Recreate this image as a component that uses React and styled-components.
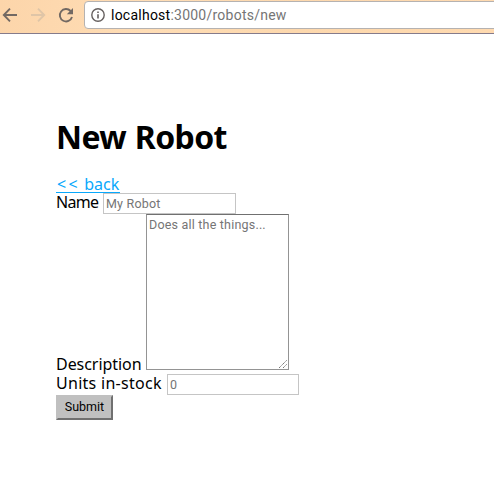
import React from "react";
import styled, { createGlobalStyle } from "styled-components";

const GlobalStyle = createGlobalStyle`
  * { box-sizing: border-box; }
  body { margin: 0; background: #fff; overflow: hidden; color: #000; font-family: "Noto Sans", sans-serif; font-size: 16px; }
`;

const Toolbar = styled.header`
  display: flex;
  height: 34px;
  background: #fed9ae;
  background-image: linear-gradient(100deg, #fcd5aa, #ffddb5 30%, #fdd8ad 60%, #ffdab0);
  border-bottom: 1px solid #857b8b;
`;

const NavIcons = styled.div`
  flex: none;
  width: 84px;
  height: 30px;
`;

const AddressBar = styled.div`
  flex: 1;
  display: flex;
  align-items: center;
  height: 28px;
  margin: 1px -6px 0 0;
  padding-left: 6px;
  background: #fff;
  border: 1px solid #b5b2b1;
  border-radius: 4px;
`;

const Address = styled.span`
  margin-left: 6px;
  color: #757575;
  font: 14px/20px Roboto, sans-serif;
  letter-spacing: 0.24px;
  white-space: nowrap;
`;

const Host = styled.span`
  color: #000;
`;

const Page = styled.main`
  padding: 81px 0 0 56px;
`;

const Title = styled.h1`
  margin: 0;
  font-size: 32px;
  line-height: 43px;
  height: 44px;
  font-weight: 700;
  letter-spacing: -0.6px;
  word-spacing: 1px;
  white-space: nowrap;
`;

const BackLink = styled.a`
  display: block;
  width: 64px;
  height: 18px;
  margin-top: 16px;
  border-bottom: 1px solid #08a8fc;
  color: #08a8fc;
  line-height: 18px;
  white-space: nowrap;
  text-decoration: none;
`;

const Arrows = styled.span`
  padding-left: 1px;
  letter-spacing: 2.4px;
`;

const Form = styled.form`
  display: flex;
  flex-direction: column;
  align-items: flex-start;
`;

const Row = styled.div`
  display: flex;
  height: ${(p) => p.$height}px;
  align-items: ${(p) => p.$align || "flex-start"};
`;

const Label = styled.label`
  width: ${(p) => p.$width}px;
  height: 18px;
  line-height: 18px;
  letter-spacing: ${(p) => p.$spacing || 0}px;
  white-space: nowrap;
`;

const Input = styled.input`
  width: ${(p) => p.$width || 133}px;
  height: 21px;
  margin: 0;
  padding: 1px 2px;
  border: 1px solid #c5c5c5;
  border-radius: 0;
  outline: none;
  font: 12.5px Roboto, sans-serif;
  letter-spacing: 0.2px;
  &::placeholder { color: #757575; opacity: 1; }
`;

const AreaFrame = styled.div`
  position: relative;
  width: 143px;
  height: 156px;
`;

const TextArea = styled.textarea`
  display: block;
  width: 100%;
  height: 100%;
  margin: 0;
  padding: 2px;
  border: 1px solid #949494;
  border-top-color: #707070;
  border-radius: 0;
  outline: none;
  resize: none;
  font: 12.5px/15px Roboto, sans-serif;
  letter-spacing: 0.2px;
  &::placeholder { color: #757575; opacity: 1; }
`;

const Grip = styled.svg`
  position: absolute;
  right: 2px;
  bottom: 2px;
`;

const Submit = styled.button`
  width: 57px;
  height: 25px;
  padding: 0 0 2px;
  border: 2px solid;
  border-color: #c0c0c0 #707070 #707070 #c0c0c0;
  border-radius: 0;
  background: #c0c0c0;
  color: #000;
  font: 12.5px Roboto, sans-serif;
`;

export default function App() {
  return (
    <>
      <GlobalStyle />
      <Toolbar>
        <NavIcons>
          <svg width="84" height="30" fill="none" strokeWidth="1.9">
            <path d="M17 15H4M10 8.7L3.8 15l6.2 6.3" stroke="#726963" />
            <path d="M31 15h13M38 8.7l6.2 6.3-6.2 6.3" stroke="#dfc5a7" />
            <path d="M70.6 11A6.2 6.2 0 1 0 72 17" stroke="#726963" />
            <path d="M73 8v6.2h-6.2z" fill="#726963" />
          </svg>
        </NavIcons>
        <AddressBar>
          <svg width="14" height="14" fill="none" stroke="#66605f">
            <circle cx="7" cy="7" r="6.2" strokeWidth="1.4" />
            <path d="M7 6.2v4.3M7 3.5v1.4" strokeWidth="1.6" />
          </svg>
          <Address><Host>localhost</Host>:3000/robots/new</Address>
        </AddressBar>
      </Toolbar>
      <Page>
        <Title>New Robot</Title>
        <BackLink href="#"><Arrows>&lt;&lt;</Arrows> back</BackLink>
        <Form>
          <Row $height={21}>
            <Label $width={47} $spacing={-0.7}>Name</Label>
            <Input placeholder="My Robot" />
          </Row>
          <Row $height={160}>
            <Row $height={159} $align="flex-end">
              <Label $width={90} $spacing={-0.05}>Description</Label>
            </Row>
            <AreaFrame>
              <TextArea placeholder="Does all the things..." />
              <Grip width="8" height="8" stroke="#777" strokeDasharray="1.4 .5">
                <path d="M0 8L8 0M4 8l4-4" />
              </Grip>
            </AreaFrame>
          </Row>
          <Row $height={21}>
            <Label $width={111} $spacing={0.28}>Units in-stock</Label>
            <Input $width={132} placeholder="0" />
          </Row>
          <Submit type="button">Submit</Submit>
        </Form>
      </Page>
    </>
  );
}
